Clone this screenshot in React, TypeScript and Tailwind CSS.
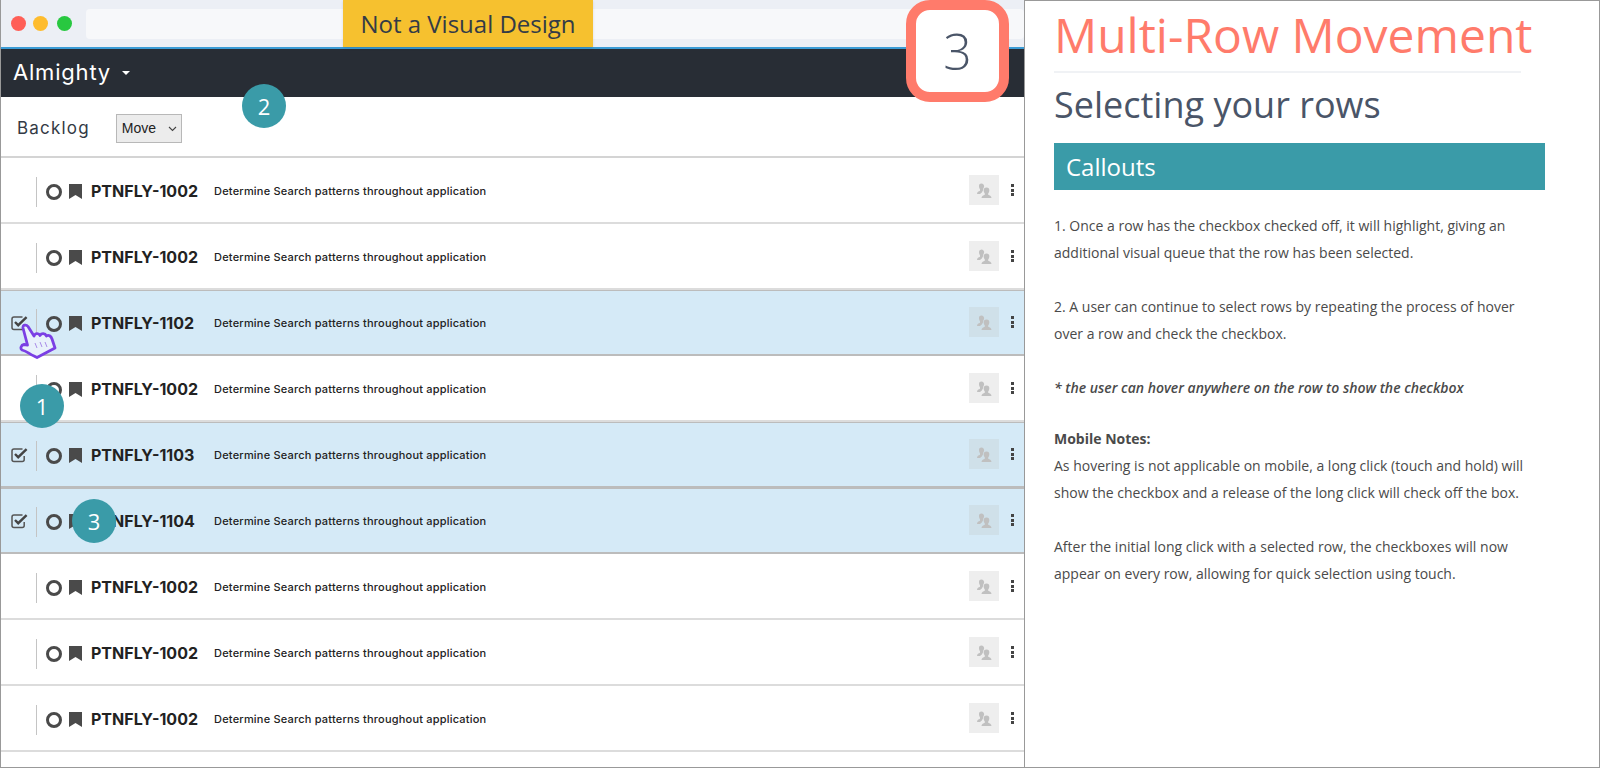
const rows = [
  { id: "PTNFLY-1002" },
  { id: "PTNFLY-1002" },
  { id: "PTNFLY-1102", selected: true },
  { id: "PTNFLY-1002" },
  { id: "PTNFLY-1103", selected: true },
  { id: "PTNFLY-1104", selected: true },
  { id: "PTNFLY-1002" },
  { id: "PTNFLY-1002" },
  { id: "PTNFLY-1002" },
];

function CheckIcon() {
  return (
    <svg width="17" height="16" viewBox="0 0 17 16" fill="none">
      <path d="M13.2 9v3.4a2 2 0 0 1-2 2H3a2 2 0 0 1-2-2V4a2 2 0 0 1 2-2h8.5" stroke="#555" strokeWidth="1.5" />
      <path d="M4 7l3.200 3.200L15.600 2.200" stroke="#444" strokeWidth="2.400" />
    </svg>
  );
}

function Bookmark() {
  return (
    <svg width="13" height="15" viewBox="0 0 13 15">
      <path d="M0 0h13v15l-6.500-4L0 15z" fill="#4a4a4a" />
    </svg>
  );
}

function People() {
  return (
    <svg width="15" height="15" viewBox="0 0 15 15" fill="#c0c0c0">
      <path d="M4.500 0.500a2.600 2.600 0 0 1 2.600 3c-.2 1.200-.6 2-1 2.600v1.200L4.800 9.500 3 11H0c0-2 1.700-2.700 3-3.300V6.200C2.400 5.500 2 4.500 2 3.400A2.600 2.600 0 0 1 4.500.5z" />
      <path d="M9.500 4.500a2.800 2.800 0 0 1 2.800 3c0 1.200-.5 2.200-1.100 2.900v1.300c1.300.6 3.300 1.200 3.300 3.300H4.500c0-2.100 2-2.700 3.300-3.300v-1.300C7.200 9.700 6.700 8.700 6.700 7.500a2.800 2.800 0 0 1 2.800-3z" />
    </svg>
  );
}

function Kebab() {
  return (
    <div className="flex flex-col gap-[1.500px]">
      <span className="w-[3px] h-[3px] bg-[#444]" />
      <span className="w-[3px] h-[3px] bg-[#444]" />
      <span className="w-[3px] h-[3px] bg-[#444]" />
    </div>
  );
}

function Hand() {
  return (
    <svg className="absolute left-[19px] top-[323px]" width="38" height="37" viewBox="0 0 38 37" fill="#e9f1fb" stroke="#7b3fe4" strokeWidth="2.800" strokeLinejoin="round">
      <path d="M4 5C3.500 2 7 1 9 3.500L15 13C16 10 20 10 21 12.500C22.500 10 26 10 27.500 13C29.500 11.500 32 13 33 16L36 25L18 34.500L15 33C10 31 8 28 3 27C1 25.500 2 22 5 21.500L8.500 22Z" />
      <path d="M16 20l2 5M21 19l2 5M26 19l2 5" stroke="#a98ce8" strokeWidth="1" fill="none" />
    </svg>
  );
}

function Badge({ n, className }: { n: number; className: string }) {
  return (
    <div className={`absolute w-11 h-11 rounded-full bg-[#3a9ba8] text-white flex items-center justify-center text-[22px] font-['Open_Sans',sans-serif] ${className}`}>
      {n}
    </div>
  );
}

function Row({ id, selected }: { id: string; selected?: boolean }) {
  return (
    <div className={`h-[66px] shrink-0 flex items-center border-b-2 pt-[3px] pr-[10px] ${selected ? "bg-[#d5eaf7] border-[#bcbcbc] shadow-[inset_0_1px_0_#bcbcbc]" : "bg-white border-[#dcdcdc]"}`}>
      <div className="w-[35px] pl-[10px] flex items-center -mt-[2px]">{selected && <CheckIcon />}</div>
      <div className="w-px h-[30px] bg-[#c4c4c4] mr-[9px]" />
      <div className="w-4 h-4 rounded-full border-[3px] border-[#4a4a4a] mr-[7px]" />
      <Bookmark />
      <span className="ml-[9px] w-[123px] -mt-[2px] text-[16px] font-bold text-[#222] font-['Inter',sans-serif]">{id}</span>
      <span className="text-[11px] font-medium tracking-[0.2px] text-[#222] font-['Inter',sans-serif]">Determine Search patterns throughout application</span>
      <div className="ml-auto -mt-[3px] flex items-center gap-[12px]">
        <div className={`w-[30px] h-[30px] flex items-center justify-center ${selected ? "bg-[#cfe0e9]" : "bg-[#eeeeee]"}`}>
          <People />
        </div>
        <Kebab />
      </div>
    </div>
  );
}

export default function App() {
  return (
    <div className="relative w-[1600px] h-[768px] flex overflow-hidden bg-white">
      <div className="w-[1025px] h-[768px] shrink-0 border-l border-b border-r border-[#999] flex flex-col overflow-hidden">
        <div className="h-[47px] shrink-0 bg-[#eceff5] flex items-center pl-[10px]">
          <span className="w-[15px] h-[15px] rounded-full bg-[#ff5f57]" />
          <span className="ml-[7px] w-[15px] h-[15px] rounded-full bg-[#febc2e]" />
          <span className="ml-[9px] w-[15px] h-[15px] rounded-full bg-[#28c840]" />
          <div className="ml-[14px] flex-1 h-[30px] rounded bg-[#f7f8fa] mt-[1px]" />
        </div>
        <div className="h-[50px] shrink-0 bg-[#282d35] border-t-2 border-[#3a9bd5] flex items-center pl-[12px] text-white">
          <span className="text-[22px] font-['Inter',sans-serif] tracking-[0.8px] mt-[-2px]">Almighty</span>
          <span className="ml-[11px] w-0 h-0 border-x-[4.500px] border-x-transparent border-t-[4px] border-t-white" />
        </div>
        <div className="h-[61px] shrink-0 flex items-center pl-[16px] pt-[4px] border-b-2 border-[#d4d4d4]">
          <span className="text-[17px] tracking-[1.2px] text-[#333a45] font-['Inter',sans-serif]">Backlog</span>
          <div className="ml-[26px] w-[66px] h-[29px] bg-[#ececec] border border-[#b8b8b8] flex items-center pl-[5px] text-[14px] text-[#222] font-['Liberation_Sans',sans-serif]">
            Move
            <svg className="ml-[12px]" width="9" height="6" viewBox="0 0 9 6" fill="none">
              <path d="M1 1l3.500 3.500L8 1" stroke="#444" strokeWidth="1.100" />
            </svg>
          </div>
        </div>
        {rows.map((r, i) => (
          <Row key={i} id={r.id} selected={r.selected} />
        ))}
      </div>

      <div className="flex-1 border-t border-r border-b border-[#999] font-['Open_Sans',sans-serif] pl-[29px]">
        <h1 className="text-[48px] leading-[66px] font-normal text-[#ff7b6b] mt-[1px]">Multi-Row Movement</h1>
        <div className="w-[467px] h-[2px] bg-[#f0f2f5] mt-[3px]" />
        <h2 className="text-[36px] leading-[50px] font-normal text-[#4a5568] mt-[7px]">Selecting your rows</h2>
        <div className="w-[491px] h-[47px] bg-[#3a9ba8] mt-[13px] pl-[12px] flex items-center text-[24px] font-normal text-white">Callouts</div>
        <div className="w-[480px] mt-[22px] text-[14px] leading-[27px] text-[#4a4a4a]">
          <p className="mb-[27px]">1. Once a row has the checkbox checked off, it will highlight, giving an additional visual queue that the row has been selected.</p>
          <p className="mb-[27px]">2. A user can continue to select rows by repeating the process of hover over a row and check the checkbox.</p>
          <p className="mb-[24px] font-semibold italic">* the user can hover anywhere on the row to show the checkbox</p>
          <p className="font-bold">Mobile Notes:</p>
          <p className="mb-[27px]">As hovering is not applicable on mobile, a long click (touch and hold) will show the checkbox and a release of the long click will check off the box.</p>
          <p>After the initial long click with a selected row, the checkboxes will now appear on every row, allowing for quick selection using touch.</p>
        </div>
      </div>

      <div className="absolute left-[343px] top-0 w-[250px] h-[47px] bg-[#f6c12f] flex items-center justify-center text-[24px] text-[#333b47] font-['Open_Sans',sans-serif] shadow-sm">Not a Visual Design</div>
      <div className="absolute left-[906px] top-0 w-[103px] h-[102px] bg-white border-[10px] border-[#ff7b6b] rounded-[24px] flex items-center justify-center text-[50px] font-light text-[#4a5568] font-['Open_Sans',sans-serif]">3</div>
      <Hand />
      <Badge n={1} className="left-[20px] top-[384px]" />
      <Badge n={2} className="left-[242px] top-[84px]" />
      <Badge n={3} className="left-[72px] top-[499px]" />
    </div>
  );
}
